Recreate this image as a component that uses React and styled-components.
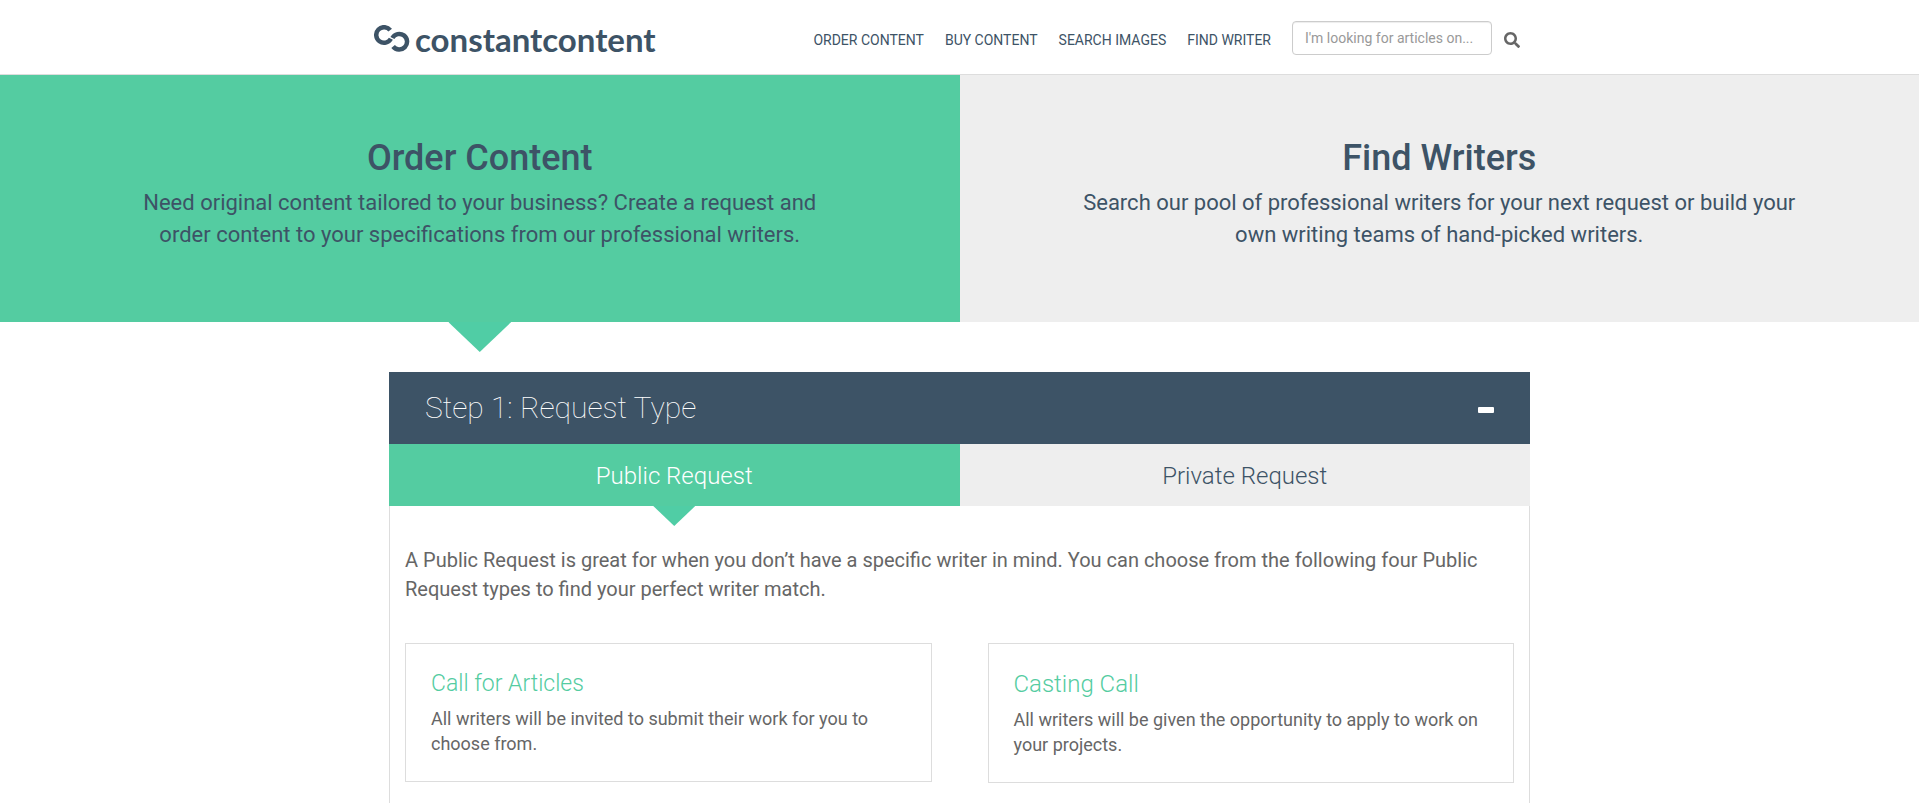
import React, { useState } from 'react';
import styled, { createGlobalStyle } from 'styled-components';
import { FaSearch } from 'react-icons/fa';

const navy = '#3d5366';
const green = '#54cca1';
const arrowGreen = '#50cda5';

const GlobalStyle = createGlobalStyle`
  * {
    box-sizing: border-box;
  }

  body {
    margin: 0;
    background: #fff;
    color: #666;
    font-family: Roboto, 'Liberation Sans', sans-serif;
    font-size: 18px;
    line-height: 25px;
  }

  h1, h2, h3, p {
    margin: 0;
  }

  button {
    font-family: inherit;
    border: 0;
    margin: 0;
    padding: 0;
    cursor: pointer;
  }
`;

const StyledHeader = styled.header`
  border-bottom: 1px solid #ddd;
`;

const StyledHeaderInner = styled.div`
  display: flex;
  align-items: center;
  justify-content: space-between;
  max-width: 1171px;
  height: 74px;
  margin: 0 auto;
  padding-right: 25px;
`;

const StyledLogo = styled.a`
  display: flex;
  align-items: center;
  gap: 5px;
  padding-top: 3px;
  color: ${navy};
  font-family: Lato, 'Open Sans', sans-serif;
  font-size: 33px;
  font-weight: 700;
  line-height: 40px;
  text-decoration: none;
`;

const StyledNav = styled.nav`
  display: flex;
  align-items: center;
  gap: 21px;
  padding-top: 2px;
`;

const StyledNavLink = styled.a`
  color: ${navy};
  font-size: 14px;
  line-height: 20px;
  text-decoration: none;
  text-transform: uppercase;
  padding-top: 4px;
`;

const StyledSearch = styled.form`
  display: flex;
  align-items: center;
  gap: 12px;
`;

const StyledSearchInput = styled.input`
  width: 200px;
  height: 34px;
  padding: 6px 12px;
  border: 1px solid #ccc;
  border-radius: 4px;
  box-shadow: inset 0 1px 1px rgba(0, 0, 0, 0.075);
  color: #555;
  font-family: inherit;
  font-size: 14px;

  &::placeholder {
    color: #999;
    opacity: 1;
  }
`;

const StyledSearchButton = styled.button`
  display: flex;
  background: none;
  color: #666;
  font-size: 16px;
  padding-top: 4px;
`;

const StyledHero = styled.section`
  display: grid;
  grid-template-columns: 1fr 1fr;
`;

const StyledHeroOption = styled.a`
  position: relative;
  min-height: 247px;
  padding: 63px 120px 60px;
  background: ${({ $active }) => ($active ? green : '#eee')};
  color: ${navy};
  text-align: center;
  text-decoration: none;
`;

const StyledHeroTitle = styled.h1`
  font-size: 36px;
  font-weight: 500;
  line-height: 40px;
  margin-bottom: 9px;
`;

const StyledHeroText = styled.p`
  font-size: 22px;
  line-height: 32px;
`;

// triangle hanging below the selected option
const StyledArrow = styled.span`
  position: absolute;
  top: 100%;
  left: 50%;
  width: ${({ $width }) => $width}px;
  height: ${({ $height }) => $height}px;
  background: ${arrowGreen};
  clip-path: polygon(0 0, 100% 0, 50% 100%);
  transform: translateX(-50%);
`;

const StyledPanel = styled.main`
  max-width: 1141px;
  margin: 50px auto 0;
`;

const StyledStepBar = styled.div`
  display: flex;
  align-items: center;
  justify-content: space-between;
  height: 72px;
  padding: 0 36px;
  background: ${navy};
  color: #fff;
`;

const StyledStepTitle = styled.h2`
  font-size: 30px;
  font-weight: 100;
  line-height: 40px;
`;

const StyledCollapse = styled.button`
  display: flex;
  padding-top: 3px;
  background: none;
`;

const StyledTabs = styled.div`
  display: grid;
  grid-template-columns: 1fr 1fr;
`;

const StyledTab = styled.button`
  position: relative;
  height: 62px;
  padding-top: 2px;
  background: ${({ $active }) => ($active ? green : '#eee')};
  color: ${({ $active }) => ($active ? '#fff' : navy)};
  font-size: 24px;
  font-weight: 300;
  line-height: 32px;
`;

const StyledPanelBody = styled.div`
  padding: 40px 15px;
  border: 1px solid #ddd;
  border-top: 0;
`;

const StyledIntro = styled.p`
  font-size: 20px;
  line-height: 29px;
  margin-bottom: 39px;
`;

const StyledCards = styled.div`
  display: grid;
  grid-template-columns: 1fr 1fr;
  align-items: start;
  gap: 40px 56px;
`;

const StyledCard = styled.article`
  padding: 24px 25px 25px;
  border: 1px solid #ddd;
`;

const StyledCardTitle = styled.h3`
  color: ${green};
  font-size: ${({ $small }) => ($small ? 23 : 24)}px;
  font-weight: 300;
  line-height: ${({ $small }) => ($small ? 31 : 32)}px;
  margin-bottom: 7px;
`;

const LogoMark = () => (
  <svg width="36" height="27" viewBox="0 0 36 27" fill="none" stroke={navy} strokeWidth="4.5" aria-hidden="true">
    <path d="M16.2 5.2A7.8 7.8 0 1 0 16.9 13.7" />
    <path d="M18.4 13A7.8 7.8 0 1 1 19.1 21.5" />
  </svg>
);

const MinusIcon = () => (
  <svg width="16" height="6" viewBox="0 0 16 6" aria-hidden="true">
    <rect width="16" height="6" rx="1" fill="#fff" />
  </svg>
);

const links = ['Order Content', 'Buy Content', 'Search Images', 'Find Writer'];

const options = [
  {
    title: 'Order Content',
    text:
      'Need original content tailored to your business? Create a request and order content to your specifications from our professional writers.',
  },
  {
    title: 'Find Writers',
    text:
      'Search our pool of professional writers for your next request or build your own writing teams of hand-picked writers.',
  },
];

const tabs = ['Public Request', 'Private Request'];

const cards = [
  {
    title: 'Call for Articles',
    text: 'All writers will be invited to submit their work for you to choose from.',
    small: true,
  },
  {
    title: 'Casting Call',
    text: 'All writers will be given the opportunity to apply to work on your projects.',
  },
];

const App = () => {
  const [activeTab, setActiveTab] = useState(0);
  const [isOpen, setOpen] = useState(true);

  return (
    <>
      <GlobalStyle />
      <StyledHeader>
        <StyledHeaderInner>
          <StyledLogo href="#">
            <LogoMark />
            <span>constantcontent</span>
          </StyledLogo>
          <StyledNav>
            {links.map((link) => (
              <StyledNavLink href="#" key={link}>
                {link}
              </StyledNavLink>
            ))}
            <StyledSearch onSubmit={(e) => e.preventDefault()}>
              <StyledSearchInput type="text" aria-label="Search articles" placeholder="I'm looking for articles on..." />
              <StyledSearchButton type="submit" aria-label="Search">
                <FaSearch />
              </StyledSearchButton>
            </StyledSearch>
          </StyledNav>
        </StyledHeaderInner>
      </StyledHeader>
      <StyledHero>
        {options.map(({ title, text }, i) => (
          <StyledHeroOption href="#" key={title} $active={i === 0}>
            <StyledHeroTitle>{title}</StyledHeroTitle>
            <StyledHeroText>{text}</StyledHeroText>
            {i === 0 && <StyledArrow $width={63} $height={30} />}
          </StyledHeroOption>
        ))}
      </StyledHero>
      <StyledPanel>
        <StyledStepBar>
          <StyledStepTitle>Step 1: Request Type</StyledStepTitle>
          <StyledCollapse type="button" aria-label="Toggle step" onClick={() => setOpen(!isOpen)}>
            <MinusIcon />
          </StyledCollapse>
        </StyledStepBar>
        {isOpen && (
          <>
            <StyledTabs>
              {tabs.map((tab, i) => (
                <StyledTab type="button" key={tab} $active={i === activeTab} onClick={() => setActiveTab(i)}>
                  {tab}
                  {i === activeTab && <StyledArrow $width={42} $height={20} />}
                </StyledTab>
              ))}
            </StyledTabs>
            <StyledPanelBody>
              <StyledIntro>
                A Public Request is great for when you don’t have a specific writer in mind. You can choose from the
                following four Public Request types to find your perfect writer match.
              </StyledIntro>
              <StyledCards>
                {cards.map(({ title, text, small }) => (
                  <StyledCard key={title}>
                    <StyledCardTitle $small={small}>{title}</StyledCardTitle>
                    <p>{text}</p>
                  </StyledCard>
                ))}
              </StyledCards>
            </StyledPanelBody>
          </>
        )}
      </StyledPanel>
    </>
  );
};

export default App;
